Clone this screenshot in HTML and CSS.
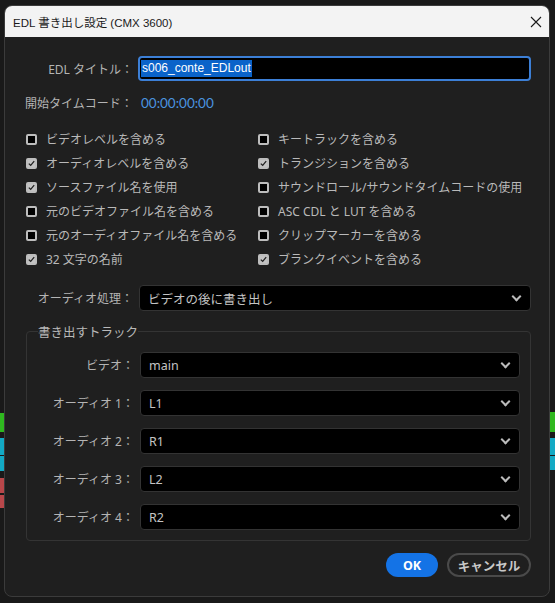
FILE: index.html
```html
<!DOCTYPE html>
<html lang="ja">
<head>
<meta charset="utf-8">
<title>EDL 書き出し設定</title>
<link rel="stylesheet" href="styles.css">
</head>
<body>
<div class="backdrop">
  <span class="strip strip-l green" style="top:413px;height:19px"></span>
  <span class="strip strip-l cyan" style="top:438px;height:17px"></span>
  <span class="strip strip-l cyan" style="top:456px;height:15px"></span>
  <span class="strip strip-l red" style="top:478px;height:15px"></span>
  <span class="strip strip-l red" style="top:495px;height:13px"></span>
  <span class="strip strip-r green" style="top:412px;height:20px"></span>
  <span class="strip strip-r cyan" style="top:438px;height:17px"></span>
  <span class="strip strip-r cyan" style="top:456px;height:14px"></span>
</div>
<div class="dialog">
  <div class="titlebar">
    <span class="title">EDL 書き出し設定 (CMX 3600)</span>
    <svg class="close" width="12" height="12" viewBox="0 0 12 12"><path d="M1 1 L11 11 M11 1 L1 11" stroke="#1a1a1a" stroke-width="1.1" fill="none"/></svg>
  </div>
  <div class="content">
    <div class="field title-field">
      <label class="lbl">EDL タイトル：</label>
      <div class="textinput"><span class="sel">s006_conte_EDLout</span></div>
    </div>
    <div class="field tc-field">
      <label class="lbl lbl-left">開始タイムコード：</label>
      <span class="tc">00:00:00:00</span>
    </div>
    <div class="checks">
      <div class="chk"><span class="box"></span>ビデオレベルを含める</div>
      <div class="chk"><span class="box"></span>キートラックを含める</div>
      <div class="chk"><span class="box on"></span>オーディオレベルを含める</div>
      <div class="chk"><span class="box on"></span>トランジションを含める</div>
      <div class="chk"><span class="box on"></span>ソースファイル名を使用</div>
      <div class="chk"><span class="box"></span>サウンドロール/サウンドタイムコードの使用</div>
      <div class="chk"><span class="box"></span>元のビデオファイル名を含める</div>
      <div class="chk"><span class="box"></span>ASC CDL と LUT を含める</div>
      <div class="chk"><span class="box"></span>元のオーディオファイル名を含める</div>
      <div class="chk"><span class="box"></span>クリップマーカーを含める</div>
      <div class="chk"><span class="box on"></span>32 文字の名前</div>
      <div class="chk"><span class="box on"></span>ブランクイベントを含める</div>
    </div>
    <div class="field audio-field">
      <label class="lbl">オーディオ処理：</label>
      <div class="select">ビデオの後に書き出し<span class="chev"></span></div>
    </div>
    <fieldset class="group">
      <legend>書き出すトラック</legend>
      <div class="field track"><label class="lbl">ビデオ：</label><div class="select">main<span class="chev"></span></div></div>
      <div class="field track"><label class="lbl">オーディオ 1：</label><div class="select">L1<span class="chev"></span></div></div>
      <div class="field track"><label class="lbl">オーディオ 2：</label><div class="select">R1<span class="chev"></span></div></div>
      <div class="field track"><label class="lbl">オーディオ 3：</label><div class="select">L2<span class="chev"></span></div></div>
      <div class="field track"><label class="lbl">オーディオ 4：</label><div class="select">R2<span class="chev"></span></div></div>
    </fieldset>
    <div class="buttons">
      <button class="btn ok">OK</button>
      <button class="btn cancel">キャンセル</button>
    </div>
  </div>
</div>
</body>
</html>
```
FILE: styles.css
```css
* { box-sizing: border-box; }
html, body {
  margin: 0;
  padding: 0;
  background: #191919;
  width: 555px;
  height: 603px;
  overflow: hidden;
  font-family: "Noto Sans", "Noto Sans CJK JP", sans-serif;
}
.backdrop { position: absolute; inset: 0; }
.strip { position: absolute; width: 6px; }
.strip-l { left: 0; width: 4px; }
.strip-r { right: 0; width: 6px; }
.green { background: #2fb81f; }
.cyan { background: #13a9c4; }
.red { background: #b8474a; }

.dialog {
  position: relative;
  margin: 5px 0 0 4px;
  width: 546px;
  height: 592px;
  background: #1f1f1f;
  border: 1px solid #3b3b3b;
  border-radius: 8px;
  overflow: hidden;
  display: flex;
  flex-direction: column;
}
.titlebar {
  height: 31px;
  background: #f3f3f3;
  display: flex;
  align-items: center;
  justify-content: space-between;
  padding: 0 7px 0 8px;
  flex: none;
}
.title {
  font-size: 11.5px;
  color: #1a1a1a;
  font-family: "Liberation Sans", "Noto Sans CJK JP", sans-serif;
}

.content {
  padding: 19px 18px 0 20px;
  color: #b9b9b9;
  font-size: 12px;
}
.field {
  display: grid;
  grid-template-columns: 108px 1fr;
  column-gap: 6px;
  align-items: center;
}
.lbl {
  text-align: right;
  color: #b4b4b4;
  white-space: nowrap;
}
.lbl-left { text-align: left; }
.textinput {
  height: 25px;
  background: #000;
  border: 2px solid #3c7fd6;
  border-radius: 4px;
  display: flex;
  align-items: center;
  padding-left: 1px;
  margin-left: -1px;
}
.sel {
  background: #0a63c9;
  color: #fff;
  font-family: "Liberation Sans", sans-serif;
  font-size: 12px;
  line-height: 17px;
  padding: 0 1px;
}
.tc-field { margin-top: 13px; height: 18px; }
.tc { color: #4a94e0; font-size: 13.5px; margin-left: 2px; font-family: "Lato", "Noto Sans", sans-serif; }

.checks {
  margin-top: 15px;
  display: grid;
  grid-template-columns: 232px 1fr;
  grid-auto-rows: 24px;
  padding-left: 1px;
}
.chk {
  display: flex;
  align-items: center;
  gap: 9px;
  white-space: nowrap;
  color: #b9b9b9;
}
.box {
  width: 11px;
  height: 11px;
  border: 2px solid #bdbdbd;
  border-radius: 2px;
  background: #000;
  flex: none;
}
.box.on {
  background: #c3c3c3 url("data:image/svg+xml;utf8,<svg xmlns='http://www.w3.org/2000/svg' width='7' height='7' viewBox='0 0 7 7'><path d='M0.8 3.6 L2.7 5.4 L6.2 1.2' stroke='%23222' stroke-width='1.3' fill='none'/></svg>") center/7px 7px no-repeat;
}

.audio-field { margin-top: 14px; }
.select {
  height: 26px;
  background: #000;
  border: 1px solid #333;
  border-radius: 4px;
  color: #c4c4c4;
  font-size: 12.5px;
  display: flex;
  align-items: center;
  justify-content: space-between;
  padding: 0 10px 0 8px;
}
.chev {
  width: 7px;
  height: 7px;
  border-right: 2px solid #bbb;
  border-bottom: 2px solid #bbb;
  transform: rotate(45deg);
  margin-top: -4px;
}

.group {
  margin: 11px 0 0 1px;
  border: 1px solid #343434;
  border-radius: 4px;
  padding: 11px 10px 10px 0;
  min-width: 0;
}
.group legend {
  padding: 0;
  margin-left: 11px;
  color: #b9b9b9;
  font-size: 12.5px;
}
.group .field { grid-template-columns: 107px 1fr; margin-bottom: 12px; }
.group .field:last-child { margin-bottom: 0; }

.buttons {
  display: flex;
  justify-content: flex-end;
  gap: 9px;
  margin-top: 12px;
}
.btn {
  height: 24px;
  border-radius: 12px;
  font-family: "Noto Sans", "Noto Sans CJK JP", sans-serif;
  font-weight: bold;
  font-size: 12.5px;
  padding: 0;
  display: flex;
  align-items: center;
  justify-content: center;
}
.ok {
  width: 52px;
  background: #1473e6;
  border: none;
  color: #fff;
}
.cancel {
  width: 84px;
  background: transparent;
  border: 2px solid #4a4a4a;
  color: #c8c8c8;
}
```
